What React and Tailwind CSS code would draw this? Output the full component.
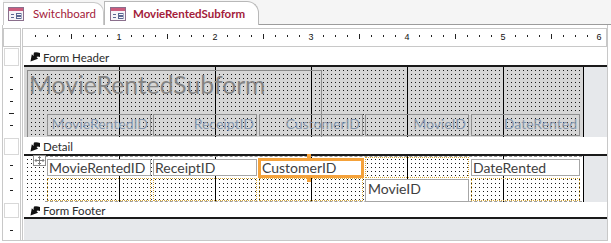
import React from 'react';

const rulerMarks = [];
for (let k = 1; k <= 48; k++) {
  const x = k * 12;
  if (k % 8 === 0) {
    rulerMarks.push(
      <text key={k} x={x} y="11" textAnchor="middle" fontSize="9" fontFamily="Liberation Sans, Arial, sans-serif" fill="#111">
        {k / 8}
      </text>,
    );
  } else if (k % 4 === 0) {
    rulerMarks.push(<rect key={k} x={x} y="5" width="1" height="5" fill="#222" />);
  } else {
    rulerMarks.push(<rect key={k} x={x} y="6" width="1" height="2" fill="#222" />);
  }
}

function FormIcon() {
  return (
    <svg width="16" height="14" viewBox="0 0 16 14" className="block shrink-0">
      <rect x="0.5" y="0.5" width="15" height="13" fill="#f6f4f8" stroke="#8a6f8c" />
      <rect x="1" y="1" width="14" height="3" fill="#cc5c7e" />
      <path d="M3 7.5h3M3 10.5h3" stroke="#5b6791" />
      <rect x="8.5" y="6.5" width="4.5" height="2" fill="none" stroke="#5b6791" />
      <rect x="8.5" y="9.5" width="4.5" height="2" fill="none" stroke="#5b6791" />
    </svg>
  );
}

function BarArrow() {
  return (
    <svg width="10" height="10" viewBox="0 0 10 10" className="block shrink-0">
      <path d="M4 0.5 Q7 0 10 1 L10 5 Q7.5 4.2 6.5 5 L8 6.8 L0.5 9.5 L1.8 2.2 L3.6 4 Q3.4 2 4 0.5Z" fill="#111" />
    </svg>
  );
}

function VTicks({ h, ticks }) {
  return (
    <svg width="17" height={h} className="block">
      {ticks.map(([y, long]) =>
        long ? (
          <rect key={y} x="6" y={y} width="5" height="1" fill="#222" />
        ) : (
          <rect key={y} x="7" y={y} width="3" height="1" fill="#222" />
        ),
      )}
    </svg>
  );
}

function BarCell() {
  return (
    <div className="w-[18px] shrink-0 border-r border-[#c8c8c8] p-[1px]">
      <div className="h-full border border-[#d8d8d8] bg-white" />
    </div>
  );
}

function SectionBar({ label, className }) {
  return (
    <div className={`flex ${className}`}>
      <BarCell />
      <div className="ml-[1px] flex-1 border-l border-[#c8c8c8] pl-[1px]">
        <div className="h-full flex items-center gap-[3px] pl-[6px] pt-[2px] bg-white border-b-2 border-[#1a1a1a] text-[11.5px] text-[#2b2b2b] leading-none">
          <BarArrow />
          <span className="pt-[1px]">{label}</span>
        </div>
      </div>
    </div>
  );
}

const headerLabels = [
  { text: 'MovieRentedID', cls: 'left-[23px] w-[104px]' },
  { text: 'ReceiptID', cls: 'left-[129px] w-[104px]' },
  { text: 'CustomerID', cls: 'left-[235px] w-[104px]' },
  { text: 'MovieID', cls: 'left-[341px] w-[104px]' },
  { text: 'DateRented', cls: 'left-[447px] w-[109px]' },
];

export default function App() {
  return (
    <div className="w-[611px] h-[243px] bg-white overflow-hidden flex flex-col font-['Lato','Open_Sans',sans-serif]">
      {/* document tabs */}
      <div className="h-[25px] shrink-0 flex items-end bg-[#f5f5f5]">
        <div className="w-[3px] h-full bg-white" />
        <div className="h-[23px] w-[101px] flex items-center gap-[9px] pl-[4px] bg-white border-t border-l border-r border-[#c9c9c9] rounded-tr-[10px] text-[11.5px] text-[#a3203a]">
          <FormIcon />
          <span>Switchboard</span>
        </div>
        <div className="h-[24px] w-[155px] flex items-center gap-[7px] pl-[5px] bg-white border-t border-l border-r border-[#b8b8b8] rounded-tr-[12px] text-[11.5px] font-bold text-[#a3203a]">
          <FormIcon />
          <span>MovieRentedSubform</span>
        </div>
        <div className="flex-1 h-full border-b border-[#9c9c9c]" />
      </div>

      {/* design surface */}
      <div className="flex-1 flex flex-col ml-[2px] mr-[3px] mb-[2px] pt-[3px] border-l border-r border-b border-[#c8c8c8]">
        {/* ruler */}
        <div className="flex h-[19px] shrink-0">
          <div className="w-[18px] shrink-0 border border-[#c8c8c8] bg-white" />
          <div className="ml-[1px] flex-1 border border-[#c8c8c8] bg-white">
            <svg width="583" height="17" className="block">
              {rulerMarks}
            </svg>
          </div>
        </div>

        <SectionBar label="Form Header" className="h-[20px] shrink-0" />

        {/* form header section */}
        <div className="flex h-[70px] shrink-0">
          <div className="w-[18px] shrink-0 border-r border-[#c8c8c8] bg-white">
            <VTicks h={70} ticks={[[10, false], [22, false], [34, false], [46, true], [58, false]]} />
          </div>
          <div className="ml-[1px] flex-1 flex border-l border-[#c8c8c8] pl-[1px]">
            <div className="relative w-[560px] h-full overflow-hidden border-r border-black bg-[#d6d6d6] bg-[image:linear-gradient(to_right,transparent_95px,#000_95px,#000_96px,transparent_96px),linear-gradient(to_right,#d6d6d6_3px,transparent_3px),linear-gradient(to_bottom,#d6d6d6_3px,#1a1a1a_3px)] bg-[length:96px_100%,4px_4px,4px_4px]">
              <div className="absolute left-[3px] top-[3px] w-[295px] h-[80px] border border-[#8c8c8c] pl-[1px] text-[24.7px] leading-[28px] text-[#848484]">
                MovieRentedSubform
              </div>
              {headerLabels.map((l) => (
                <div
                  key={l.text}
                  className={`absolute top-[47px] h-[22px] ${l.cls} border border-[#8f8f8f] pr-[2px] text-right text-[14px] leading-[17px] text-[#8595ab]`}
                >
                  {l.text}
                </div>
              ))}
            </div>
            <div className="flex-1 bg-[#e6e8eb]" />
          </div>
        </div>

        <SectionBar label="Detail" className="h-[19px] shrink-0" />

        {/* detail section */}
        <div className="flex h-[46px] shrink-0">
          <div className="w-[18px] shrink-0 border-r border-[#c8c8c8] bg-white">
            <VTicks h={46} ticks={[[9, false], [22, false], [34, false]]} />
          </div>
          <div className="ml-[1px] flex-1 flex border-l border-[#c8c8c8] pl-[1px]">
            <div className="relative w-[560px] h-full border-r border-black bg-white bg-[image:linear-gradient(to_right,transparent_95px,#000_95px,#000_96px,transparent_96px),linear-gradient(to_right,#fff_3px,transparent_3px),linear-gradient(to_bottom,#fff_3px,#1a1a1a_3px)] bg-[length:96px_100%,4px_4px,4px_4px]">
              {/* control layout outline */}
              <div className="absolute left-[21px] top-0 w-[537px] h-[46px] border-t border-b border-dashed border-[#9c9c9c]" />
              {/* empty layout cells */}
              <div className="absolute left-[341px] top-[1px] w-[104px] h-[21px] border border-dotted border-[#d6a83a]" />
              <div className="absolute left-[23px] top-[22px] w-[104px] h-[23px] border border-dotted border-[#d6a83a]" />
              <div className="absolute left-[129px] top-[22px] w-[104px] h-[23px] border border-dotted border-[#d6a83a]" />
              <div className="absolute left-[235px] top-[22px] w-[104px] h-[23px] border border-dotted border-[#d6a83a]" />
              <div className="absolute left-[447px] top-[22px] w-[109px] h-[23px] border border-dotted border-[#d6a83a]" />

              {/* text boxes */}
              <div className="absolute left-[23px] top-[3px] w-[104px] h-[17px] bg-white border border-[#a6a6a6] pl-[1px] text-[14px] leading-[15px] text-[#3f3f3f]">
                MovieRentedID
              </div>
              <div className="absolute left-[129px] top-[3px] w-[104px] h-[17px] bg-white border border-[#a6a6a6] pl-[1px] text-[14px] leading-[15px] text-[#3f3f3f]">
                ReceiptID
              </div>
              <div className="absolute left-[234px] top-[2px] w-[106px] h-[20px] bg-white border-[3px] border-[#f5a23a] pl-[1px] text-[14px] leading-[14px] text-[#3f3f3f]">
                CustomerID
              </div>
              <div className="absolute left-[283px] top-[-2px] w-[4px] h-[4px] bg-[#f5a23a]" />
              <div className="absolute left-[283px] top-[22px] w-[4px] h-[4px] bg-[#f5a23a]" />
              <div className="absolute left-[341px] top-[23px] w-[104px] h-[23px] bg-white border border-[#a6a6a6] pl-[2px] text-[14px] leading-[17px] text-[#3f3f3f]">
                MovieID
              </div>
              <div className="absolute left-[447px] top-[3px] w-[109px] h-[17px] bg-white border border-[#a6a6a6] pl-[1px] text-[14px] leading-[15px] text-[#3f3f3f]">
                DateRented
              </div>

              {/* layout move handle */}
              <div className="absolute left-[9px] top-[-1px] w-[13px] h-[11px] bg-white border border-[#8d8d8d]">
                <svg width="11" height="9" viewBox="0 0 11 9" className="block">
                  <path d="M5.5 0.5v8M1 4.5h9" stroke="#7a7a7a" />
                  <path d="M4 2l1.5-1.5L7 2M4 7l1.5 1.5L7 7M2.5 3L1 4.5 2.5 6M8.5 3L10 4.5 8.5 6" stroke="#7a7a7a" fill="none" />
                </svg>
              </div>
            </div>
            <div className="flex-1 bg-[#e6e8eb]" />
          </div>
        </div>

        <SectionBar label="Form Footer" className="h-[17px] shrink-0" />

        {/* empty area below */}
        <div className="flex flex-1">
          <div className="w-[18px] shrink-0 border-r border-[#c8c8c8] bg-white">
            <VTicks h={21} ticks={[[11, false]]} />
          </div>
          <div className="ml-[1px] flex-1 border-l border-[#c8c8c8] pl-[1px]">
            <div className="h-full bg-[#e6e8eb]" />
          </div>
        </div>
      </div>
    </div>
  );
}
